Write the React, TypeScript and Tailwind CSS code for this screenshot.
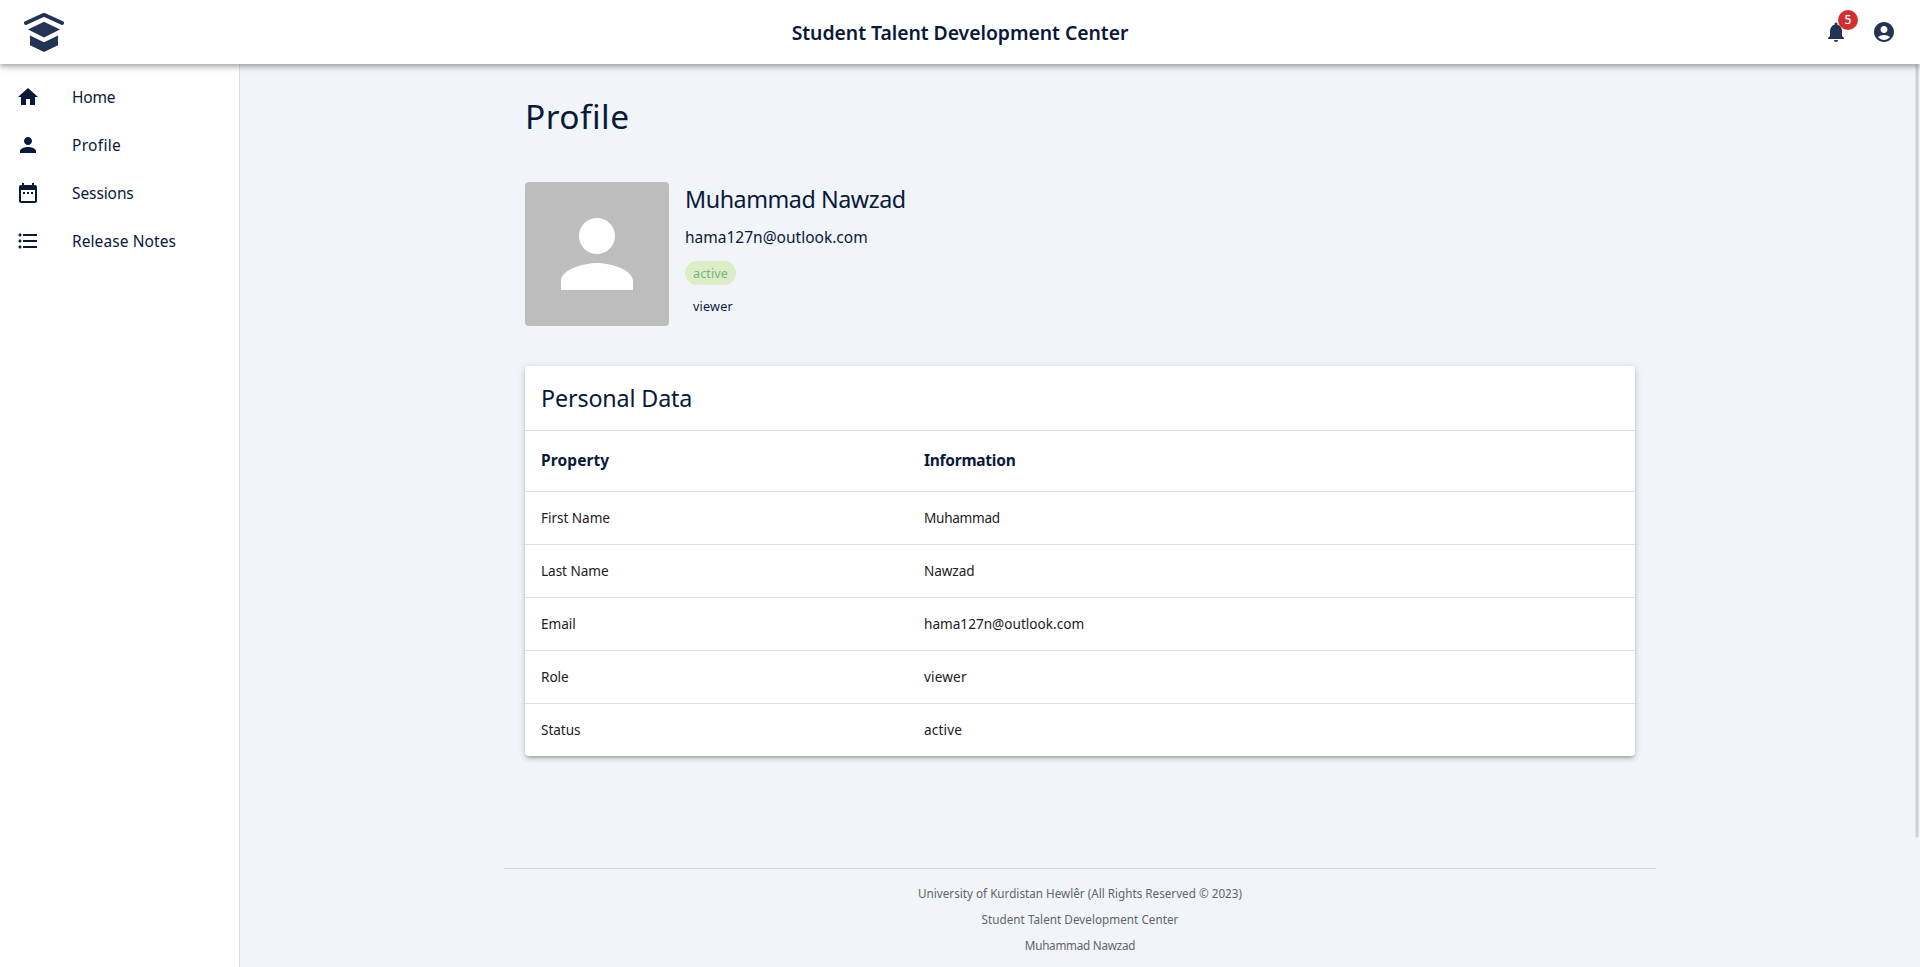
import type { ReactNode } from "react";
import {
  MdAccountCircle,
  MdDateRange,
  MdFormatListBulleted,
  MdHome,
  MdNotifications,
  MdPerson,
} from "react-icons/md";

function Logo() {
  return (
    <svg viewBox="0 0 40 40" className="size-10" fill="#233354">
      <path d="M1.9 11 20 2.8l18.1 8.2" fill="none" stroke="#233354" strokeWidth="3.8" strokeLinecap="round" strokeLinejoin="round" />
      <path d="M20 9.8 36 17.5 20 25.4 4 17.5Z" />
      <path d="M6 23.5 20 30.2l14-6.7v9.7L20 40 6 33.2Z" />
    </svg>
  );
}

function Header() {
  return (
    <header className="z-10 grid h-16 shrink-0 grid-cols-[1fr_auto_1fr] items-center bg-white px-6 shadow-[0px_2px_4px_-1px_rgba(0,0,0,0.2),0px_4px_5px_0px_rgba(0,0,0,0.14),0px_1px_10px_0px_rgba(0,0,0,0.12)]">
      <Logo />
      <h1 className="mt-0.5 text-[19.4px] leading-8 font-semibold tracking-[-0.05px]">Student Talent Development Center</h1>
      <div className="flex items-center justify-end gap-6 text-[#233354]">
        <div className="relative">
          <MdNotifications size={24} />
          <span className="absolute -top-2.5 left-3.5 flex size-5 items-center justify-center rounded-full bg-[#d32f2f] text-[12px] leading-none font-medium text-white">
            5
          </span>
        </div>
        <MdAccountCircle size={24} />
      </div>
    </header>
  );
}

function NavItem({ icon, label, className = "" }: { icon: ReactNode; label: string; className?: string }) {
  return (
    <a className="flex h-12 items-center px-4">
      <span className="w-14">{icon}</span>
      <span className={`text-[15.5px] leading-6 ${className}`}>{label}</span>
    </a>
  );
}

function Sidebar() {
  return (
    <nav className="w-60 shrink-0 border-r border-[#e0e0e0] bg-white pt-[9px]">
      <NavItem icon={<MdHome size={24} />} label="Home" className="tracking-[-0.2px]" />
      <NavItem icon={<MdPerson size={24} />} label="Profile" className="tracking-[0.3px]" />
      <NavItem icon={<MdDateRange size={24} />} label="Sessions" className="tracking-[-0.1px]" />
      <NavItem icon={<MdFormatListBulleted size={24} />} label="Release Notes" className="tracking-[0.08px]" />
    </nav>
  );
}

const rows = [
  { property: "First Name", value: "Muhammad", fit: "tracking-[-0.3px]" },
  { property: "Last Name", value: "Nawzad", fit: "tracking-[-0.1px]" },
  { property: "Email", value: "hama127n@outlook.com", fit: "" },
  { property: "Role", value: "viewer", fit: "tracking-[0.15px]" },
  { property: "Status", value: "active", fit: "tracking-[0.15px]" },
];

function Summary() {
  return (
    <section className="mt-[44px] flex h-36 gap-4">
      <div className="flex size-36 items-center justify-center rounded bg-[#bdbdbd] text-white">
        <MdPerson size={108} />
      </div>
      <div className="flex flex-col items-start">
        <h3 className="h-[35px] text-[23.3px] leading-[35px] tracking-[-0.45px]">Muhammad Nawzad</h3>
        <p className="mt-2 h-6 text-[15.5px] leading-6">hama127n@outlook.com</p>
        <span className="mt-3 h-6 rounded-full bg-[#dcedc8] px-2 text-[12.6px] leading-[25px] tracking-[0.1px] text-[#74b578]">
          active
        </span>
        <span className="mt-[9px] h-6 px-2 text-[12.6px] leading-[26px] tracking-[0.2px]">viewer</span>
      </div>
    </section>
  );
}

function PersonalData() {
  return (
    <section className="mt-10 rounded bg-white shadow-[0px_3px_3px_-2px_rgba(0,0,0,0.2),0px_3px_4px_0px_rgba(0,0,0,0.14),0px_1px_8px_0px_rgba(0,0,0,0.12)]">
      <h3 className="flex h-16 items-center px-4 text-[23.3px] tracking-[-0.15px]">Personal Data</h3>
      <div className="grid h-[62px] grid-cols-[383px_1fr] items-center border-y border-[#dcdcdc] px-4 text-[15.5px] font-bold">
        <span className="tracking-[0.1px]">Property</span>
        <span className="tracking-[-0.25px]">Information</span>
      </div>
      {rows.map((row) => (
        <div
          key={row.property}
          className="grid h-[53px] grid-cols-[383px_1fr] items-center border-b border-[#e0e0e0] px-4 text-[13.6px] text-[#212121] last:h-[52px] last:border-b-0"
        >
          <span className="tracking-[-0.05px]">{row.property}</span>
          <span className={row.fit}>{row.value}</span>
        </div>
      ))}
    </section>
  );
}

function Footer() {
  return (
    <footer className="mx-auto mt-auto flex h-[99px] w-[1152px] flex-col items-center gap-1.5 border-t border-[#d2d6da] pt-[14px] text-[11.7px] leading-5 text-[#626467]">
      <p>University of Kurdistan Hewlêr (All Rights Reserved © 2023)</p>
      <p className="tracking-[0.03px]">Student Talent Development Center</p>
      <p className="tracking-[-0.25px]">Muhammad Nawzad</p>
    </footer>
  );
}

export default function App() {
  return (
    <div className="flex h-[967px] w-[1920px] flex-col overflow-hidden bg-[#f1f5fa] font-['Noto_Sans',sans-serif] text-[#0a1939]">
      <Header />
      <div className="flex min-h-0 flex-1">
        <Sidebar />
        <main className="relative flex flex-1 flex-col">
          <div className="mx-auto w-[1110px] pt-8">
            <h2 className="h-[42px] text-[33.5px] leading-[40px] tracking-[0.45px]">Profile</h2>
            <Summary />
            <PersonalData />
          </div>
          <Footer />
          <div className="absolute top-0 right-px h-[774px] w-1 rounded-full border border-[#dde1e5] bg-[#ced2d5]" />
        </main>
      </div>
    </div>
  );
}
